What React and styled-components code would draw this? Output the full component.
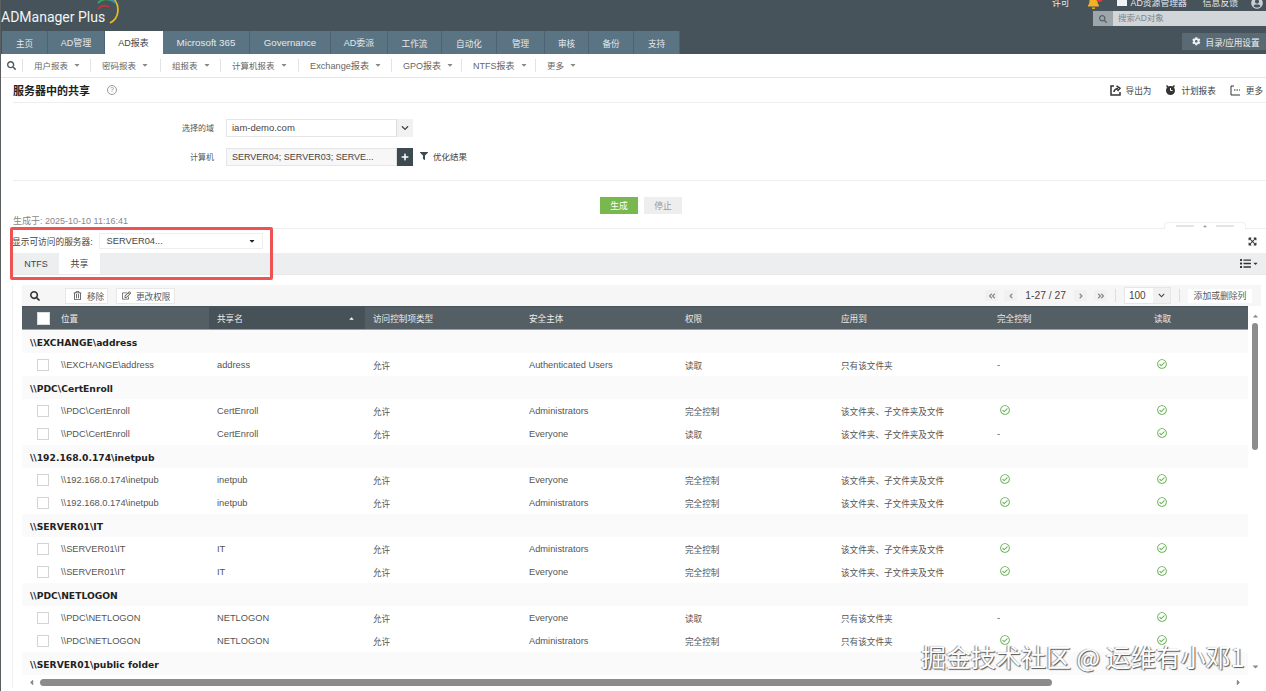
import React from 'react';
import styled, { createGlobalStyle } from 'styled-components';
import { FaCog, FaBell, FaUserCircle, FaFilter, FaSearch, FaCaretDown, FaCaretUp, FaPlus, FaCaretLeft, FaCaretRight, FaChevronDown, FaAngleLeft, FaAngleRight, FaAngleDoubleLeft, FaAngleDoubleRight, FaRegTrashAlt, FaRegEdit, FaExpandArrowsAlt, FaList, FaRegCheckCircle } from 'react-icons/fa';

const FONT = '"Liberation Sans", "Noto Sans CJK SC", sans-serif';

const GlobalStyle = createGlobalStyle`
  html, body { margin: 0; padding: 0; background: #fff; }
  body { font-family: ${FONT}; color: #444; }
  * { box-sizing: border-box; }
`;

const Page = styled.div`
  position: relative;
  width: 1266px;
  height: 691px;
  overflow: hidden;
  border-left: 1px solid #5a5f62;
  background: #fff;
  font-size: 9.5px;
`;

const Header = styled.header`
  height: 54px;
  margin-left: -1px;
  background: #46535a;
  display: flex;
  flex-direction: column;
`;

const HeaderTop = styled.div`
  height: 31px;
  display: flex;
  justify-content: space-between;
`;

const Logo = styled.div`
  position: relative;
  width: 125px;
  padding: 7px 0 0 1px;
  color: #f2f4f5;
  font-family: Roboto, sans-serif;
  font-size: 14px;
  line-height: 20px;
  white-space: nowrap;
  svg { position: absolute; left: 92px; top: 0; }
`;

const HeaderRight = styled.div`
  display: flex;
  flex-direction: column;
  align-items: flex-end;
`;

const TopLinks = styled.div`
  height: 13px;
  margin-top: -4px;
  display: flex;
  align-items: center;
  color: #e6e9ea;
  font-size: 8.8px;
  white-space: nowrap;
`;

const TopLink = styled.span`
  display: flex;
  align-items: center;
  margin-left: ${(p) => p.$gap}px;
`;

const BellWrap = styled.span`
  position: relative;
  display: flex;
  color: #f0b323;
  font-size: 13px;
  margin-left: 17px;
  i {
    position: absolute;
    right: -3px;
    top: -1px;
    width: 7px;
    height: 7px;
    border-radius: 50%;
    background: #e23b3b;
  }
`;

const Explorer = styled.span`
  width: 10px;
  height: 7px;
  margin-right: 4px;
  background: #f1f3f4;
`;

const UserIcon = styled(FaUserCircle)`
  font-size: 12px;
  margin: 0 3px 0 13px;
  color: #c9cfd2;
`;

const SearchBox = styled.div`
  width: 173px;
  height: 15px;
  margin-top: 2px;
  display: flex;
  background: #d3d6d8;
  color: #7b858a;
  font-size: 8.5px;
  line-height: 15px;
`;

const SearchAddon = styled.span`
  width: 20px;
  margin-right: 5px;
  display: flex;
  align-items: center;
  justify-content: center;
  background: #9ca6ab;
  color: #56626a;
  font-size: 8px;
`;

const HeaderBottom = styled.div`
  height: 23px;
  display: flex;
  justify-content: space-between;
  padding-left: 2px;
`;

const Tabs = styled.nav`
  display: flex;
`;

const Tab = styled.div`
  width: ${(p) => p.$w}px;
  display: flex;
  align-items: center;
  justify-content: center;
  font-size: ${(p) => p.$size}px;
  white-space: nowrap;
  color: ${(p) => (p.$active ? '#444' : '#e4e9ec')};
  background: ${(p) => (p.$active ? '#fff' : '#5b7483')};
  border-right: 1px solid ${(p) => (p.$active ? '#fff' : '#4d6371')};
`;

const SettingsBtn = styled.div`
  width: 84px;
  height: 17px;
  margin-top: 2px;
  padding-left: 10px;
  display: flex;
  align-items: center;
  gap: 5px;
  background: #5a6a74;
  color: #eef1f2;
  font-size: 8.6px;
  white-space: nowrap;
`;

const SubNav = styled.div`
  height: 24px;
  padding: 0 0 1px 6px;
  display: flex;
  align-items: center;
  border-bottom: 1px solid #e6e6e6;
`;

const SubSearch = styled.span`
  width: 15px;
  display: flex;
  color: #4d5a61;
  font-size: 9px;
`;

const SubItem = styled.div`
  width: ${(p) => p.$w}px;
  height: 13px;
  padding-left: 11px;
  display: flex;
  align-items: center;
  gap: 5px;
  border-left: 1px solid #e3e3e3;
  color: #666;
  font-size: ${(p) => p.$size}px;
  white-space: nowrap;
  svg { font-size: 8px; color: #888; }
`;

const TitleRow = styled.div`
  height: 25px;
  margin-left: 12px;
  display: flex;
  align-items: center;
  justify-content: space-between;
  border-bottom: 1px solid #eee;
`;

const Title = styled.h1`
  margin: 0;
  display: flex;
  align-items: center;
  font-size: 11px;
  font-weight: 700;
  color: #222;
`;

const Help = styled.span`
  width: 10px;
  height: 10px;
  margin-left: 17px;
  border: 1px solid #999;
  border-radius: 50%;
  color: #888;
  font-size: 7px;
  font-weight: 400;
  line-height: 8px;
  text-align: center;
`;

const Actions = styled.div`
  display: flex;
  gap: 14px;
  padding-right: 3px;
`;

const Action = styled.span`
  display: flex;
  align-items: center;
  gap: 5px;
  color: #444;
  font-size: 8.6px;
  svg { display: block; }
`;

const Form = styled.div`
  padding-top: 16px;
  margin-left: 12px;
  height: 78px;
  border-bottom: 1px solid #eee;
`;

const FormRow = styled.div`
  display: flex;
  align-items: center;
  height: 18px;
  margin-bottom: 11px;
`;

const FormLabel = styled.label`
  width: 201px;
  margin-top: -1px;
  text-align: right;
  color: #555;
  font-size: 8px;
`;

const Field = styled.div`
  width: 187px;
  height: 18px;
  margin-left: 12px;
  display: flex;
  border: 1px solid #e6e6e6;
  background: ${(p) => (p.$tinted ? '#f7f7f7' : '#fff')};
  color: #444;
  font-size: ${(p) => p.$size}px;
  line-height: 16px;
`;

const FieldText = styled.span`
  flex: 1;
  padding-left: ${(p) => p.$pad}px;
  white-space: nowrap;
  overflow: hidden;
`;

const FieldBtn = styled.span`
  width: 17px;
  margin: -1px -1px -1px 0;
  display: flex;
  align-items: center;
  justify-content: center;
  font-size: 8px;
  color: ${(p) => (p.$dark ? '#fff' : '#444')};
  background: ${(p) => (p.$dark ? '#3d4a51' : '#f1f1f1')};
  border-left: 1px solid #ddd;
`;

const Refine = styled.span`
  display: flex;
  align-items: center;
  gap: 5px;
  margin-left: 7px;
  margin-top: -2px;
  color: #444;
  font-size: 8.5px;
  svg { font-size: 8px; color: #3d4a51; }
`;

const ButtonRow = styled.div`
  display: flex;
  gap: 6px;
  margin-top: 16px;
  padding-left: 599px;
`;

const Button = styled.button`
  width: 38px;
  height: 17px;
  padding: 0;
  border: 0;
  font: 8.8px ${FONT};
  color: ${(p) => (p.$primary ? '#fff' : '#999')};
  background: ${(p) => (p.$primary ? '#79b84f' : '#eeeeee')};
`;

const MetaRow = styled.div`
  height: 15px;
  margin-left: 12px;
  display: flex;
  align-items: flex-end;
  justify-content: space-between;
  border-bottom: 1px solid #eee;
  color: #888;
  font-size: 9px;
  line-height: 14px;
`;

const Handle = styled.div`
  width: 82px;
  height: 7px;
  margin: 0 20px -1px 0;
  display: flex;
  align-items: center;
  justify-content: center;
  gap: 8px;
  border: 1px solid #f0f0f0;
  border-bottom: 0;
  border-radius: 4px 4px 0 0;
  background: #fff;
  color: #999;
  svg { font-size: 6px; }
  i { width: 18px; height: 2px; background: #e4e4e4; }
`;

const ServerRow = styled.div`
  height: 24px;
  display: flex;
  align-items: center;
  padding-left: 11px;
  color: #444;
  font-size: 8.7px;
  white-space: nowrap;
`;

const ServerSelect = styled.div`
  width: 164px;
  height: 16px;
  margin-left: 6px;
  padding: 0 6px 0 7px;
  display: flex;
  align-items: center;
  justify-content: space-between;
  border: 1px solid #eee;
  color: #444;
  font-size: 9.3px;
  svg { font-size: 8px; color: #222; }
`;

const Expand = styled(FaExpandArrowsAlt)`
  margin-left: auto;
  margin-right: 9px;
  font-size: 9px;
  color: #333;
`;

const TabBar = styled.div`
  height: 22px;
  margin-left: 12px;
  display: flex;
  align-items: stretch;
  background: #eceeef;
  border-bottom: 1px solid #e6e8e9;
  padding-right: 7px;
`;

const ResultTab = styled.div`
  width: ${(p) => p.$w}px;
  display: flex;
  align-items: center;
  justify-content: center;
  font-size: 9px;
  color: #444;
  background: ${(p) => (p.$active ? '#fff' : 'transparent')};
`;

const ListToggle = styled.span`
  margin-left: auto;
  display: flex;
  align-items: center;
  gap: 1px;
  color: #333;
  font-size: 11px;
  svg + svg { font-size: 7px; }
`;

const Panel = styled.section`
  width: 1248px;
  margin: 10px 0 0 11px;
  padding-left: 9px;
  border-left: 1px solid #eee;
`;

const Toolbar = styled.div`
  height: 21px;
  width: 1239px;
  display: flex;
  align-items: center;
  background: #f6f6f6;
  padding-right: 9px;
`;

const ToolSearch = styled.span`
  width: 43px;
  padding-left: 8px;
  display: flex;
  color: #333;
  font-size: 10px;
`;

const ToolBtn = styled.span`
  width: ${(p) => p.$w}px;
  height: 16px;
  margin-right: 8px;
  padding-left: ${(p) => p.$pad}px;
  display: flex;
  align-items: center;
  gap: 5px;
  border: 1px solid #e8e8e8;
  background: #fff;
  color: #555;
  font-size: 8.6px;
  svg { font-size: 9px; color: #555; }
`;

const Pager = styled.div`
  margin-left: auto;
  display: flex;
  align-items: center;
  color: #444;
  font-size: 10.3px;
`;

const PageBtn = styled.span`
  width: 13px;
  height: 11px;
  margin: 0 ${(p) => p.$mr}px 0 ${(p) => p.$ml || 0}px;
  display: flex;
  align-items: center;
  justify-content: center;
  background: #f1f1f1;
  color: #888;
  font-size: 8px;
`;

const PageSep = styled.i`
  width: 1px;
  height: 13px;
  margin: 0 8px;
  background: #ddd;
`;

const PerPage = styled.span`
  width: 47px;
  height: 17px;
  display: flex;
  border: 1px solid #e6e6e6;
  background: #fff;
  line-height: 15px;
  font-size: 10px;
  span { flex: 1; padding-left: 4px; }
  b {
    width: 17px;
    display: flex;
    align-items: center;
    justify-content: center;
    background: #f1f1f1;
    font-size: 7px;
  }
`;

const ColumnsBtn = styled.span`
  width: 64px;
  height: 14px;
  display: flex;
  align-items: center;
  justify-content: center;
  background: #fff;
  color: #555;
  font-size: 8.8px;
`;

const TableArea = styled.div`
  display: flex;
  height: 370px;
`;

const Table = styled.div`
  width: 1227px;
  overflow: hidden;
`;

const GRID = '31px repeat(6, 156px) 157px 103px';

const HeadRow = styled.div`
  height: 24px;
  display: grid;
  grid-template-columns: ${GRID};
  background: #545f65;
  color: #e8ebec;
  font-size: 8.6px;
  border-top: 1px solid #4a5459;
  border-bottom: 1px solid #9aa1a5;
`;

const HeadCell = styled.div`
  display: flex;
  align-items: center;
  justify-content: space-between;
  padding: 0 10px 0 8px;
  background: ${(p) => (p.$sorted ? '#475258' : 'transparent')};
  svg { font-size: 7px; color: #fff; }
`;

const HeadCheck = styled.div`
  display: flex;
  align-items: center;
  padding-left: 15px;
  span { width: 13px; height: 13px; background: #fff; border: 1px solid #ddd; }
`;

const GroupRow = styled.div`
  height: 23px;
  padding-left: 8px;
  padding-top: 1px;
  display: flex;
  align-items: center;
  background: #fafafa;
  color: #222;
  font-family: "DejaVu Sans", sans-serif;
  font-size: 9.2px;
  font-weight: 700;
`;

const DataRow = styled.div`
  height: 23px;
  display: grid;
  grid-template-columns: ${GRID};
  background: #fff;
  color: #555;
`;

const Cell = styled.div`
  display: flex;
  align-items: center;
  padding-left: 8px;
  white-space: nowrap;
  font-size: ${(p) => (p.$cjk ? '8.6px' : '9.3px')};
`;

const RowCheck = styled.div`
  display: flex;
  align-items: center;
  padding-left: 15px;
  span { width: 12px; height: 12px; border: 1px solid #d4d4d4; background: #fff; }
`;

const Tick = styled(FaRegCheckCircle)`
  margin: -2px 0 0 3px;
  font-size: 10px;
  color: #6db45a;
`;

const VScroll = styled.div`
  width: 10px;
  margin-left: 2px;
  display: flex;
  flex-direction: column;
  align-items: center;
  color: #888;
  svg { font-size: 9px; }
`;

const VArrowUp = styled(FaCaretUp)`
  margin-top: 6px;
  height: 8px;
`;

const VThumb = styled.div`
  width: 6px;
  height: 127px;
  margin-top: 3px;
  margin-bottom: auto;
  border-radius: 3px;
  background: #8c8c8c;
`;

const VArrowDown = styled(FaCaretDown)`
  margin-bottom: 5px;
`;

const HScroll = styled.div`
  height: 12px;
  width: 1227px;
  display: flex;
  align-items: center;
  color: #888;
  svg { font-size: 9px; }
`;

const HThumb = styled.div`
  width: 1012px;
  height: 7px;
  margin: 0 auto 0 4px;
  border-radius: 4px;
  background: #8c8c8c;
`;

const HLeft = styled(FaCaretLeft)`
  margin-left: 5px;
`;

const HRight = styled(FaCaretRight)`
  margin-right: 6px;
`;

const Highlight = styled.div`
  position: absolute;
  left: 9px;
  top: 227px;
  width: 263px;
  height: 53px;
  border: 3px solid #ee5253;
  border-radius: 2px;
  pointer-events: none;
`;

const Watermark = styled.div`
  position: absolute;
  left: 920px;
  top: 639px;
  color: #fff;
  font-family: "Noto Sans CJK SC", sans-serif;
  font-size: 25px;
  line-height: 34px;
  white-space: nowrap;
  text-shadow: 1px 1px 1px #555, -1px 0 1px #888;
`;

const TOP_TABS = [
  ['主页', 46, 8.6], ['AD管理', 57, 9], ['AD报表', 58, 9, true], ['Microsoft 365', 87, 9.8], ['Governance', 81, 9.6], ['AD委派', 57, 9],
  ['工作流', 54, 8.6], ['自动化', 55, 8.6], ['管理', 48, 8.6], ['审核', 44, 8.6], ['备份', 45, 8.6], ['支持', 46, 8.6],
];
const SUB_ITEMS = [
  ['用户报表', 68, 8.5], ['密码报表', 70, 8.5], ['组报表', 60, 8.5], ['计算机报表', 78, 8.5],
  ['Exchange报表', 93, 9.2], ['GPO报表', 70, 9], ['NTFS报表', 74, 9], ['更多', 50, 8.5],
];
const COLUMNS = ['共享名', '访问控制项类型', '安全主体', '权限', '应用到', '完全控制', '读取'];

const ALL = '该文件夹、子文件夹及文件';
const ONLY = '只有该文件夹';
const GROUPS = [
  { path: '\\\\EXCHANGE\\address', name: 'address', rows: [['Authenticated Users', false, ONLY]] },
  { path: '\\\\PDC\\CertEnroll', name: 'CertEnroll', rows: [['Administrators', true, ALL], ['Everyone', false, ALL]] },
  { path: '\\\\192.168.0.174\\inetpub', name: 'inetpub', rows: [['Everyone', true, ALL], ['Administrators', true, ALL]] },
  { path: '\\\\SERVER01\\IT', name: 'IT', rows: [['Administrators', true, ALL], ['Everyone', true, ALL]] },
  { path: '\\\\PDC\\NETLOGON', name: 'NETLOGON', rows: [['Everyone', false, ONLY], ['Administrators', true, ONLY]] },
  { path: '\\\\SERVER01\\public folder', name: 'public folder', rows: [] },
];

const LogoArcs = () => (
  <svg width="30" height="27" viewBox="0 0 30 27" fill="none">
    <path d="M21 -2C28 5 28 18 18 23" stroke="#e8b923" strokeWidth="1.8" />
    <path d="M6 3C10 -1 16 -2 21 1" stroke="#3aa35c" strokeWidth="2" />
    <path d="M16 -1C19 -1 21 0 23 3" stroke="#2f8fc4" strokeWidth="2" />
    <path d="M6 9C9 5 13 5 17 7" stroke="#c8323c" strokeWidth="1.8" />
  </svg>
);

const ExportIcon = () => (
  <svg width="11" height="11" viewBox="0 0 11 11" fill="none" stroke="#333" strokeWidth="1.5">
    <path d="M4 1H1V10H10V7" />
    <path d="M4 7C4 5 5 4 8 3.5M6.5 1L10 3.2L7.5 6" />
  </svg>
);

const ScheduleIcon = () => (
  <svg width="11" height="12" viewBox="0 0 11 12">
    <circle cx="5.5" cy="6.5" r="4.5" fill="#333" />
    <path d="M1.5 1.5L3 3M9.5 1.5L8 3" stroke="#333" strokeWidth="1.5" />
    <path d="M5.5 4V6.5H7.5" stroke="#fff" fill="none" />
  </svg>
);

const MoreIcon = () => (
  <svg width="11" height="11" viewBox="0 0 11 11" fill="none" stroke="#333">
    <path d="M4 1H1V10H10" />
    <path d="M4 5H10" strokeDasharray="1.5 1" />
  </svg>
);

const App = () => (
  <Page>
    <GlobalStyle />
    <Header>
      <HeaderTop>
        <Logo>
          ADManager Plus
          <LogoArcs />
        </Logo>
        <HeaderRight>
          <TopLinks>
            <TopLink $gap={0}>许可</TopLink>
            <BellWrap><FaBell /><i /></BellWrap>
            <TopLink $gap={17}><Explorer />AD资源管理器</TopLink>
            <TopLink $gap={16}>信息反馈</TopLink>
            <UserIcon />
          </TopLinks>
          <SearchBox>
            <SearchAddon><FaSearch /></SearchAddon>
            搜索AD对象
          </SearchBox>
        </HeaderRight>
      </HeaderTop>
      <HeaderBottom>
        <Tabs>
          {TOP_TABS.map(([label, w, size, active]) => (
            <Tab key={label} $w={w} $size={size} $active={active}>{label}</Tab>
          ))}
        </Tabs>
        <SettingsBtn><FaCog />目录/应用设置</SettingsBtn>
      </HeaderBottom>
    </Header>

    <SubNav>
      <SubSearch><FaSearch /></SubSearch>
      {SUB_ITEMS.map(([item, w, size]) => (
        <SubItem key={item} $w={w} $size={size}>{item}<FaCaretDown /></SubItem>
      ))}
    </SubNav>

    <TitleRow>
      <Title>服务器中的共享<Help>?</Help></Title>
      <Actions>
        <Action><ExportIcon />导出为</Action>
        <Action><ScheduleIcon />计划报表</Action>
        <Action><MoreIcon />更多</Action>
      </Actions>
    </TitleRow>

    <Form>
      <FormRow>
        <FormLabel>选择的域</FormLabel>
        <Field $size={9.5}><FieldText $pad={5}>iam-demo.com</FieldText><FieldBtn><FaChevronDown /></FieldBtn></Field>
      </FormRow>
      <FormRow>
        <FormLabel>计算机</FormLabel>
        <Field $tinted $size={9}><FieldText $pad={5}>SERVER04; SERVER03; SERVE...</FieldText><FieldBtn $dark><FaPlus /></FieldBtn></Field>
        <Refine><FaFilter />优化结果</Refine>
      </FormRow>
    </Form>

    <ButtonRow>
      <Button $primary>生成</Button>
      <Button>停止</Button>
    </ButtonRow>

    <MetaRow>
      <span>生成于: 2025-10-10 11:16:41</span>
      <Handle><i /><FaCaretUp /><i /></Handle>
    </MetaRow>

    <ServerRow>
      显示可访问的服务器:
      <ServerSelect>SERVER04...<FaCaretDown /></ServerSelect>
      <Expand />
    </ServerRow>

    <TabBar>
      <ResultTab $w={46}>NTFS</ResultTab>
      <ResultTab $w={41} $active>共享</ResultTab>
      <ListToggle><FaList /><FaCaretDown /></ListToggle>
    </TabBar>

    <Panel>
      <Toolbar>
        <ToolSearch><FaSearch /></ToolSearch>
        <ToolBtn $w={43} $pad={7}><FaRegTrashAlt />移除</ToolBtn>
        <ToolBtn $w={59} $pad={5}><FaRegEdit />更改权限</ToolBtn>
        <Pager>
          <PageBtn $mr={6}><FaAngleDoubleLeft /></PageBtn>
          <PageBtn $mr={8}><FaAngleLeft /></PageBtn>
          1-27 / 27
          <PageBtn $ml={8} $mr={7}><FaAngleRight /></PageBtn>
          <PageBtn $mr={0}><FaAngleDoubleRight /></PageBtn>
          <PageSep />
          <PerPage><span>100</span><b><FaChevronDown /></b></PerPage>
          <PageSep />
          <ColumnsBtn>添加或删除列</ColumnsBtn>
        </Pager>
      </Toolbar>

      <TableArea>
        <Table>
          <HeadRow>
            <HeadCheck><span /></HeadCheck>
            <HeadCell>位置</HeadCell>
            {COLUMNS.map((col, i) => (
              <HeadCell key={col} $sorted={i === 0}>{col}{i === 0 && <FaCaretUp />}</HeadCell>
            ))}
          </HeadRow>
          {GROUPS.map((group) => (
            <React.Fragment key={group.path}>
              <GroupRow>{group.path}</GroupRow>
              {group.rows.map(([principal, full, applies]) => (
                <DataRow key={principal}>
                  <RowCheck><span /></RowCheck>
                  <Cell>{group.path}</Cell>
                  <Cell>{group.name}</Cell>
                  <Cell $cjk>允许</Cell>
                  <Cell>{principal}</Cell>
                  <Cell $cjk>{full ? '完全控制' : '读取'}</Cell>
                  <Cell $cjk>{applies}</Cell>
                  <Cell>{full ? <Tick /> : '-'}</Cell>
                  <Cell><Tick /></Cell>
                </DataRow>
              ))}
            </React.Fragment>
          ))}
        </Table>
        <VScroll>
          <VArrowUp />
          <VThumb />
          <VArrowDown />
        </VScroll>
      </TableArea>

      <HScroll>
        <HLeft />
        <HThumb />
        <HRight />
      </HScroll>
    </Panel>

    <Highlight />
    <Watermark>掘金技术社区 @ 运维有小邓1</Watermark>
  </Page>
);

export default App;
